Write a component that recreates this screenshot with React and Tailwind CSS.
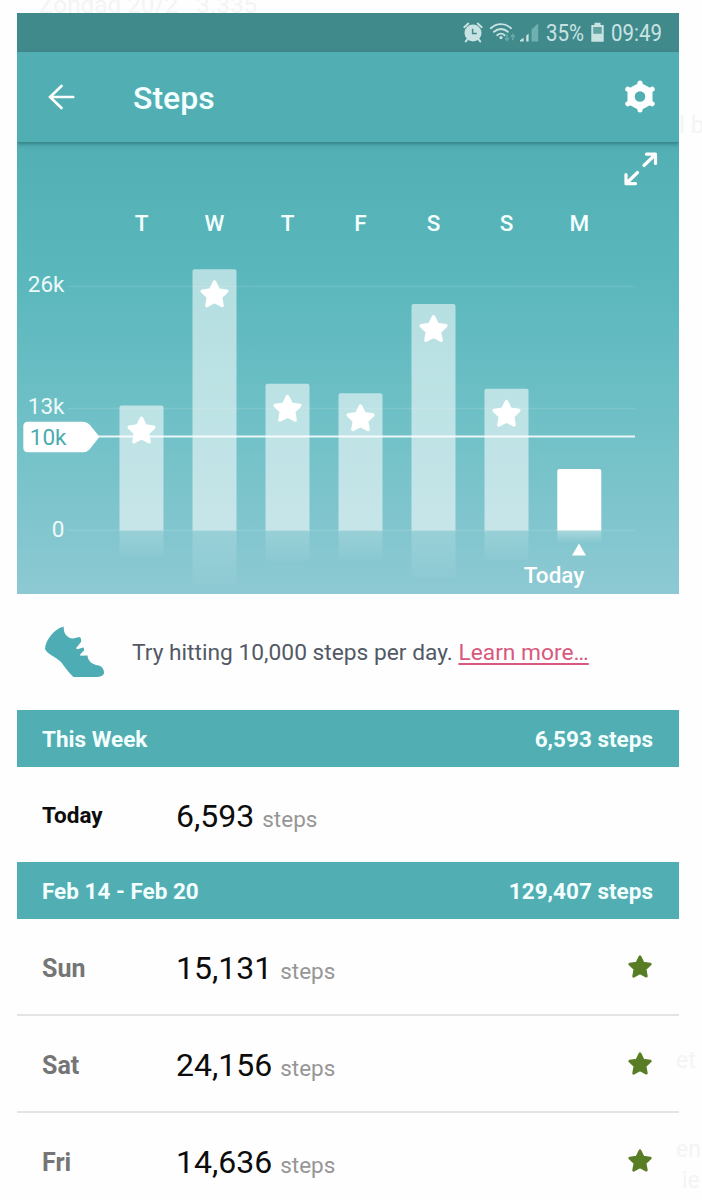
const BASE = 530.5;

const days = [
  { label: "T", x: 141.5, top: 405.5, star: true },
  { label: "W", x: 214.5, top: 269.3, star: true },
  { label: "T", x: 287.5, top: 383.7, star: true },
  { label: "F", x: 360.5, top: 393.2, star: true },
  { label: "S", x: 433.5, top: 304, star: true },
  { label: "S", x: 506.5, top: 388.7, star: true },
  { label: "M", x: 579.3, top: 469, star: false },
];

function starPoints(cx, cy, r, inner) {
  const pts = [];
  for (let i = 0; i < 10; i++) {
    const rad = i % 2 ? r * inner : r;
    const a = -Math.PI / 2 + (i * Math.PI) / 5;
    pts.push(`${(cx + rad * Math.cos(a)).toFixed(2)},${(cy + rad * Math.sin(a)).toFixed(2)}`);
  }
  return pts.join(" ");
}

function StatusBar() {
  return (
    <div className="flex h-[39px] items-center bg-[#418a8c] text-[#c9e3e3]">
      <svg className="ml-[446px] h-[39px] w-[80px] shrink-0" viewBox="463 13 80 39" fill="currentColor">
        <circle cx="473" cy="33" r="8.5" />
        <path d="M464.3 27.200l4-3.600M481.700 27.200l-4-3.600M467.600 39.200l-1.800 2.200M478.400 39.200l1.800 2.200" fill="none" stroke="currentColor" strokeWidth="2" strokeLinecap="round" />
        <path d="M472.600 28.800v4.800h4.200" fill="none" stroke="#418a8c" strokeWidth="1.500" />
        <path d="M490.800 28.200c5.800-5.400 14.400-5.400 20.200 0M494 31.800c4-3.700 9.800-3.700 13.800 0M497.200 35.200c2.100-1.900 5.300-1.900 7.400 0" fill="none" stroke="currentColor" strokeWidth="1.900" strokeLinecap="round" />
        <circle cx="501" cy="37.600" r="1.600" />
        <g fill="none" stroke="#64a8aa" strokeWidth="1.600">
          <path d="M507 34.500v5.500M505 38l2 2.400 2-2.400M512.800 40.200v-5M510.800 37l2-2.400 2 2.400" />
        </g>
        <path d="M520 41.500v-1.200l3.600-2.600v3.800zM526.200 41.500v-5.700l2.400-2.200v7.900z" />
        <path d="M531.500 41.500V29.500l6.700-6.300v18.300z" fill="#6fb0b1" />
      </svg>
      <span className="ml-[3px] block w-[39px] origin-left scale-x-[0.87] pt-[2px] text-[23.5px] leading-none whitespace-nowrap">35%</span>
      <svg className="ml-[5px] h-[39px] w-[15px] shrink-0" viewBox="590 13 15 39">
        <path d="M591.300 25h3.200v-2.200h6V25h3.200v16.700h-12.400z" fill="#c9e3e3" />
        <path d="M593.200 27h8.600v6.800h-8.600z" fill="#64a3a4" />
      </svg>
      <span className="ml-[6px] block origin-left scale-x-[0.87] pt-[2px] text-[23.5px] leading-none whitespace-nowrap">09:49</span>
    </div>
  );
}

function AppBar() {
  return (
    <header className="relative z-10 flex h-[90px] items-center bg-[#51afb3] shadow-[0_2px_4px_rgba(20,80,85,0.5)]">
      <svg className="ml-[31px] h-8 w-8" viewBox="48 81 32 32" fill="none" stroke="#fff" strokeWidth="2.600" strokeLinecap="round">
        <path d="M73.200 97H50.500M61.500 86L50 97L61.500 108" />
      </svg>
      <h1 className="ml-[53px] pt-[2px] text-[32px] leading-none font-medium text-[#f4ffff]">Steps</h1>
      <svg className="mr-[22px] ml-auto h-[34px] w-[34px]" viewBox="-17 -16.500 34 34" fill="#fff">
        <polygon points="0,-12.500 11,-6.500 11,6.500 0,12.500 -11,6.500 -11,-6.500" stroke="#fff" strokeWidth="3" strokeLinejoin="round" />
        <g stroke="#fff" strokeWidth="5" strokeLinecap="round">
          <path d="M0-13.500V13.500M-12.200-7.300L12.200 7.300M12.200-7.300L-12.200 7.300" />
        </g>
        <circle r="5.300" fill="#51afb3" />
      </svg>
    </header>
  );
}

function StepsChart() {
  return (
    <svg className="block h-[452px] w-[662px]" viewBox="17 142 662 452">
      <defs>
        <linearGradient id="sky" x1="0" x2="0" y1="0" y2="1">
          <stop offset="0" stopColor="#52afb3" />
          <stop offset="0.3" stopColor="#5ab7bc" />
          <stop offset="0.6" stopColor="#6ec0c6" />
          <stop offset="1" stopColor="#8dc9d3" />
        </linearGradient>
        <linearGradient id="mirror" x1="0" x2="0" y1="0" y2="1">
          <stop offset="0" stopColor="#fff" stopOpacity="0.18" />
          <stop offset="1" stopColor="#fff" stopOpacity="0.03" />
        </linearGradient>
        <linearGradient id="mirrorToday" x1="0" x2="0" y1="0" y2="1">
          <stop offset="0" stopColor="#fff" stopOpacity="0.3" />
          <stop offset="1" stopColor="#fff" stopOpacity="0" />
        </linearGradient>
      </defs>
      <rect x="17" y="142" width="662" height="452" fill="url(#sky)" />
      <g fill="none" stroke="#fff" strokeWidth="3.200" strokeLinecap="round" strokeLinejoin="round">
        <path d="M644 165.500L655.300 154.500M646.500 154.200H655.500V163.500" />
        <path d="M637.500 172.500L626.200 183.500M626 174.500V183.700H635.500" />
      </g>
      <g stroke="#fff" strokeOpacity="0.11" strokeWidth="1.500">
        <path d="M68 286.500H635M68 408.500H635M68 530.500H635" />
      </g>
      {days.map((d, i) => (
        <g key={i}>
          <text x={d.x} y="231" textAnchor="middle" fill="#f4ffff" fontSize="22.5" fontWeight="500">{d.label}</text>
          <path
            d={`M${d.x - 22} ${BASE}V${d.top + 2}q0-2 2-2h40q2 0 2 2V${BASE}z`}
            fill="#fff"
            fillOpacity={d.star ? 0.55 : 1}
          />
          <rect x={d.x - 22} y={BASE} width="44" height={(BASE - d.top) * 0.21} fill={d.star ? "url(#mirror)" : "url(#mirrorToday)"} />
        </g>
      ))}
      <path d="M98 436.600H635" stroke="#fff" strokeOpacity="0.85" strokeWidth="2" />
      {days.filter((d) => d.star).map((d) => (
        <polygon key={d.x} points={starPoints(d.x, d.top + 25.8, 13, 0.5)} fill="#fff" stroke="#fff" strokeWidth="3.4" strokeLinejoin="round" />
      ))}
      <path d="M28 421.800H83Q87 421.800 89.500 424.500L99.500 436.800L89.500 449.500Q87 452.200 83 452.200H28Q23.300 452.200 23.300 447.500V426.500Q23.300 421.800 28 421.800z" fill="#fff" />
      <g fontSize="22.5" fill="#eefafa" textAnchor="end">
        <text x="64.500" y="292">26k</text>
        <text x="64.500" y="414">13k</text>
        <text x="64.500" y="536.500">0</text>
        <text x="66.500" y="444.500" fill="#4aabaf">10k</text>
      </g>
      <path d="M579 543.500L586 555.500H572z" fill="#fff" />
      <text x="554" y="583" fontSize="22.5" fontWeight="500" fill="#fff" textAnchor="middle">Today</text>
    </svg>
  );
}

function Tip() {
  return (
    <div className="flex h-[116px] items-center">
      <svg className="ml-[27px] h-[54px] w-[62px]" viewBox="44 625 62 54" fill="#4eacb5">
        <path d="M63 626.700C54 629 45.500 640 45 649C47 654 56 657 61 662C65 667 69 673 73.500 677H97C102 676.500 104.300 675 104 672C103.500 667 100 665.500 96 665C91 663.500 88 660.500 87.500 655.500L81 655.800C79.800 655.500 80 654.300 80.800 653.800L84 650.600C84.300 649 83.800 647.500 83 647.600L77.500 649.300C76 649 76 647.600 77 647L81 642C81.500 640 81 637.300 79.500 637L73 638.600C67 638 63.500 633 63.800 628Q63.800 626.700 63 626.700z" />
      </svg>
      <p className="ml-[26px] pt-[2px] text-[22.75px] leading-none whitespace-nowrap text-[#525965]">
        Try hitting 10,000 steps per day.{" "}
        <a className="text-[#d9587d] underline decoration-[1.5px] underline-offset-[3px]">Learn more…</a>
      </p>
    </div>
  );
}

function SectionHeader({ title, total }) {
  return (
    <div className="flex h-[57px] items-center justify-between bg-[#51aeb2] pt-[2px] pr-[26px] pl-[25px] text-[22.5px] leading-none font-bold text-[#f4ffff]">
      <span>{title}</span>
      <span>{total} steps</span>
    </div>
  );
}

function DayRow({ day, steps, star, className, labelClass }) {
  return (
    <div className={`flex items-center pl-[25px] ${className}`}>
      <span className={`w-[134px] leading-none font-bold ${labelClass}`}>{day}</span>
      <span className="flex items-baseline gap-[8px] pt-[2px] leading-none">
        <span className="text-[32px] leading-none text-[#0c0c0c]">{steps}</span>
        <span className="text-[22.5px] leading-none text-[#969696]">steps</span>
      </span>
      {star && (
        <svg className="mr-[26px] ml-auto h-[26px] w-[26px]" viewBox="-13 -13 26 26">
          <polygon points={starPoints(0, 0.5, 10.9, 0.5)} fill="#587d25" stroke="#587d25" strokeWidth="2.6" strokeLinejoin="round" />
        </svg>
      )}
    </div>
  );
}

function Ghost({ className, children }) {
  return <span className={`absolute leading-none whitespace-pre text-[#f4f4f4] ${className}`}>{children}</span>;
}

export default function App() {
  return (
    <div className="relative h-[1200px] w-[702px] overflow-hidden bg-[#fefefe] pt-[13px] pl-[17px] font-['Roboto',sans-serif]">
      <Ghost className="top-[-7px] left-[39px] text-[24.3px]">Zondag 20/2   3.335</Ghost>
      <Ghost className="top-[113px] left-[679px] text-[24px]">l b</Ghost>
      <Ghost className="top-[1049px] left-[676px] text-[23px]">et</Ghost>
      <Ghost className="top-[1138px] left-[676px] text-[23px]">en</Ghost>
      <Ghost className="top-[1169px] left-[682px] text-[23px]">ie</Ghost>
      <main className="relative w-[662px] overflow-hidden">
        <StatusBar />
        <AppBar />
        <StepsChart />
        <Tip />
        <SectionHeader title="This Week" total="6,593" />
        <DayRow day="Today" steps="6,593" className="h-[95px] text-[#0c0c0c]" labelClass="text-[22.5px] pt-[2px]" />
        <SectionHeader title="Feb 14 - Feb 20" total="129,407" />
        <DayRow day="Sun" steps="15,131" star className="h-[97px] border-b-2 border-[#e4e4e4] text-[#757575]" labelClass="text-[25px] pt-[3px]" />
        <DayRow day="Sat" steps="24,156" star className="h-[97px] border-b-2 border-[#e4e4e4] text-[#757575]" labelClass="text-[25px] pt-[3px]" />
        <DayRow day="Fri" steps="14,636" star className="h-[97px] border-b-2 border-transparent text-[#757575]" labelClass="text-[25px] pt-[3px]" />
      </main>
    </div>
  );
}
